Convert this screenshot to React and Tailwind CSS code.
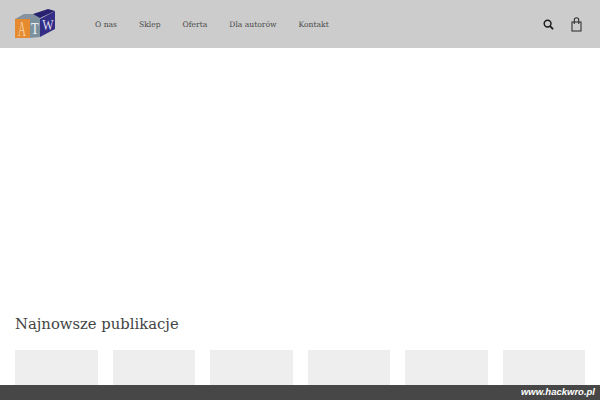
import React from "react";

const navItems = ["O nas", "Sklep", "Oferta", "Dla autorów", "Kontakt"];
const cards = [1, 2, 3, 4, 5, 6];

const Logo = () => (
  <svg width="41" height="34" viewBox="0 -2 41 34" className="block">
    <polygon points="0,10 9,5 29,5 25,10" fill="#84939e" />
    <polygon points="18,5 33,0 40,2 25,9" fill="#27216f" />
    <polygon points="0,10 15,10 15,29 0,29" fill="#e58a2e" />
    <polygon points="15,10 25,10 25,28 15,29" fill="#7c919e" />
    <polygon points="25,10 40,2 40,20 25,28" fill="#332d85" />
    <text transform="translate(7 27) scale(0.55 1)" textAnchor="middle" fontFamily="Liberation Serif, serif" fontSize="21" fill="#f5cd9c">A</text>
    <text transform="translate(20 25) scale(0.75 1)" textAnchor="middle" fontFamily="Liberation Serif, serif" fontSize="17" fill="#eef2f5">T</text>
    <text transform="translate(33 21) scale(0.8 1)" textAnchor="middle" fontFamily="Liberation Serif, serif" fontSize="15" fill="#dcdcf0">W</text>
  </svg>
);

const App = () => {
  return (
    <div className="relative h-[400px] w-[600px] overflow-hidden bg-white">
      <header className="flex h-12 items-center justify-between bg-[#cccccc] pl-[15px] pr-[18px]">
        <div className="flex items-center">
          <Logo />
          <nav className="ml-[39px] flex gap-[22px] pt-px font-['DejaVu_Serif',serif] text-[7.6px] text-[#4a4a4a]">
            {navItems.map((item) => (
              <a key={item} href="#">
                {item}
              </a>
            ))}
          </nav>
        </div>
        <div className="flex items-center gap-[17px]">
          <svg width="11" height="11" viewBox="0 0 12 12" fill="none" stroke="#1a1a1a" strokeWidth="1.6">
            <circle cx="5" cy="5" r="3.7" />
            <path d="M7.7 7.7 L11 11" strokeWidth="2" />
          </svg>
          <svg width="11" height="15" viewBox="0 0 11 15" fill="none" stroke="#333333" strokeWidth="1.1">
            <rect x="1" y="5" width="9" height="9" />
            <path d="M3.3 7 V3 a2.2 2.2 0 0 1 4.4 0 V7" />
          </svg>
        </div>
      </header>

      <main className="px-[15px] pt-[265px]">
        <h2 className="font-['DejaVu_Serif',serif] text-[14.8px] leading-[22px] text-[#444444]">Najnowsze publikacje</h2>
        <div className="mt-[15px] grid grid-cols-6 gap-[15px]">
          {cards.map((card) => (
            <div key={card} className="h-[83px] bg-[#eeeeee]" />
          ))}
        </div>
      </main>

      {/* pasek na dole */}
      <div className="absolute bottom-0 left-0 flex h-[15px] w-full items-center justify-end bg-[#474747] pr-[5px] font-['Liberation_Sans',sans-serif] text-[9.5px] font-bold italic text-white">
        www.hackwro.pl
      </div>
    </div>
  );
};

export default App;
